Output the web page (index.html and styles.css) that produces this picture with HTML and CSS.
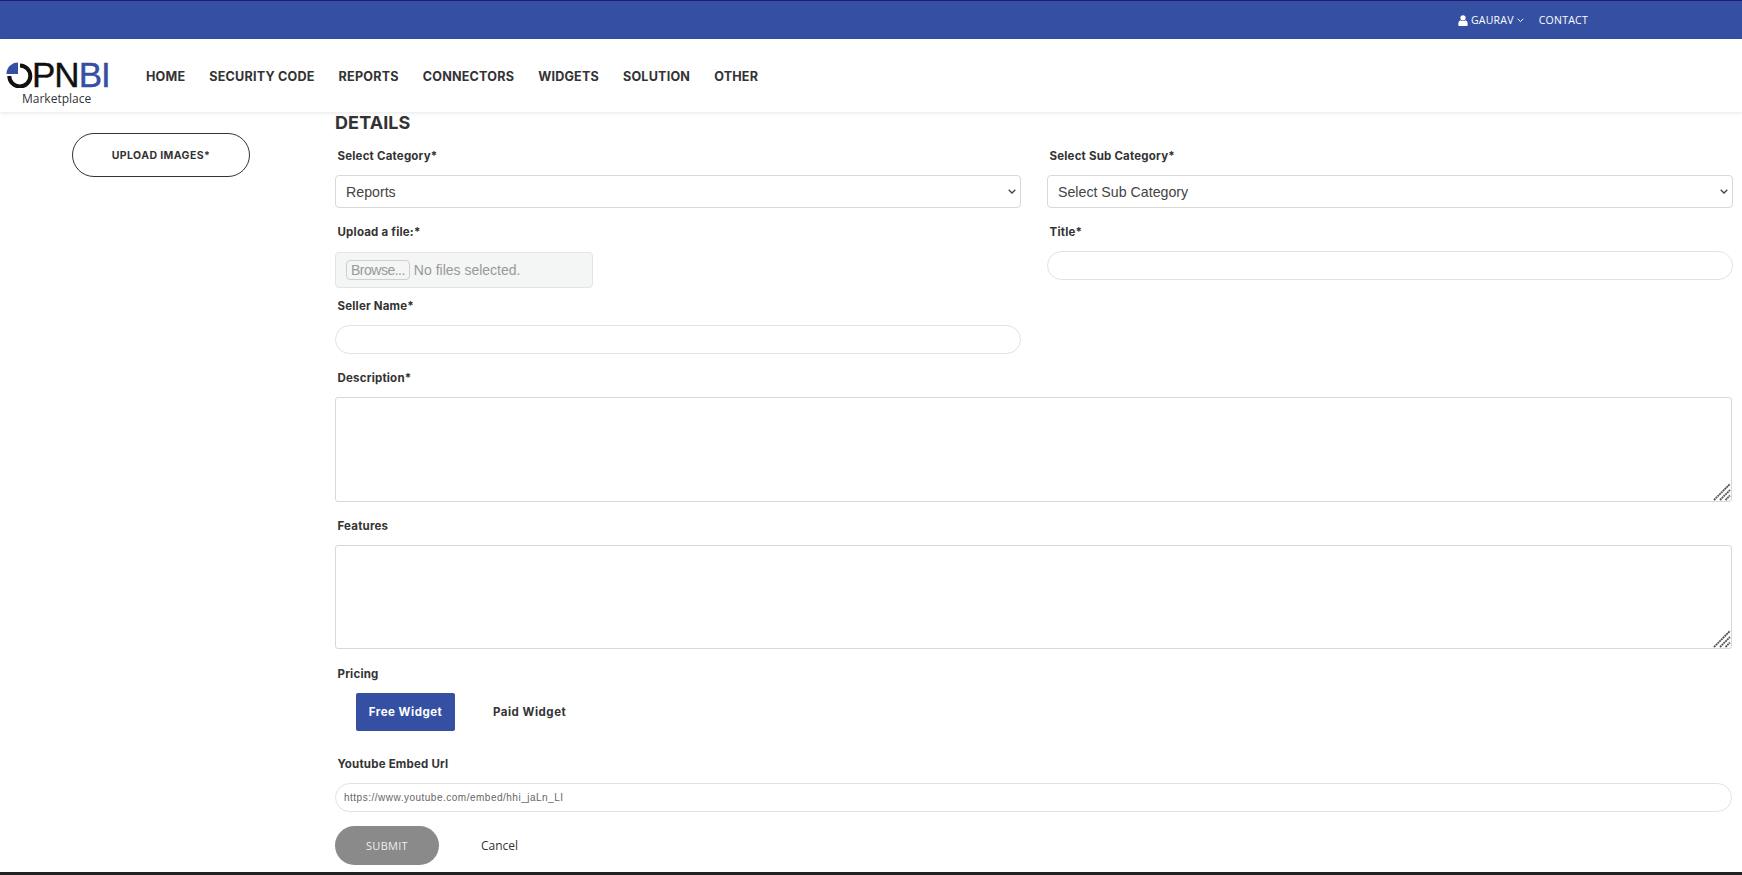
FILE: index.html
```html
<!DOCTYPE html>
<html>
<head>
  <title>OPNBI Marketplace</title>
  <link rel="stylesheet" href="styles.css">
</head>
<body>
  <div class="topbar">
    <a class="top-link">
      <svg class="user-icon" width="10" height="11" viewBox="0 0 10 11"><circle cx="5" cy="2.8" r="2.6"/><path d="M0.3 10.2C0.1 7.4 1 5.6 2.6 5.2 3.3 5.8 4.1 6.1 5 6.1s1.7-.3 2.4-.9C9 5.6 9.9 7.4 9.7 10.2 9.6 10.7 9.2 11 8.7 11H1.3C.8 11 .4 10.7.3 10.2z"/></svg>
      GAURAV
      <svg class="caret" width="7" height="5" viewBox="0 0 7 5"><path d="M0.7 0.8L3.5 3.6 6.3 0.8"/></svg>
    </a>
    <a class="top-link">CONTACT</a>
  </div>

  <div class="navbar">
    <div class="logo">
      <div class="logo-mark">
        <svg width="27" height="26" viewBox="0 0 27 26">
          <path class="ring" d="M14 3.5A10.5 10.5 0 1 1 3.3 14" />
          <path class="slice" d="M12 0.5V12H0.5A11.5 11.5 0 0 1 12 0.5z" />
        </svg>
        <span class="logo-pn">PN</span><span class="logo-bi">BI</span>
      </div>
      <div class="logo-sub">Marketplace</div>
    </div>
    <ul class="nav-menu">
      <li>HOME</li>
      <li>SECURITY CODE</li>
      <li>REPORTS</li>
      <li>CONNECTORS</li>
      <li>WIDGETS</li>
      <li>SOLUTION</li>
      <li>OTHER</li>
    </ul>
  </div>

  <div class="page">
    <div class="sidebar">
      <button class="upload-btn">UPLOAD IMAGES*</button>
    </div>

    <div class="details">
      <h2>DETAILS</h2>

      <div class="form-row">
        <div class="field">
          <label>Select Category*</label>
          <select class="select-input"><option>Reports</option></select>
        </div>
        <div class="field">
          <label>Select Sub Category*</label>
          <select class="select-input"><option>Select Sub Category</option></select>
        </div>
      </div>

      <div class="form-row row-file">
        <div class="field">
          <label>Upload a file:*</label>
          <div class="file-box">
            <span class="browse">Browse...</span>
            <span>No files selected.</span>
          </div>
        </div>
        <div class="field">
          <label>Title*</label>
          <input class="text-input" type="text">
        </div>
      </div>

      <div class="form-row row-seller">
        <div class="field">
          <label>Seller Name*</label>
          <input class="text-input" type="text">
        </div>
      </div>

      <div class="field field-area">
        <label>Description*</label>
        <div class="area-wrap">
          <textarea></textarea>
          <svg class="grip" width="18" height="18" viewBox="0 0 18 18"><path d="M1 17L17 1M7 17L17 7M12.5 17L17 12.5"/></svg>
        </div>
      </div>

      <div class="field field-area">
        <label>Features</label>
        <div class="area-wrap">
          <textarea></textarea>
          <svg class="grip" width="18" height="18" viewBox="0 0 18 18"><path d="M1 17L17 1M7 17L17 7M12.5 17L17 12.5"/></svg>
        </div>
      </div>

      <div class="field field-pricing">
        <label>Pricing</label>
        <div class="pricing-tabs">
          <span class="tab active">Free Widget</span>
          <span class="tab">Paid Widget</span>
        </div>
      </div>

      <div class="field field-url">
        <label>Youtube Embed Url</label>
        <input class="text-input url-input" type="text" value="https://www.youtube.com/embed/hhi_jaLn_LI">
      </div>

      <div class="actions">
        <button class="submit-btn">SUBMIT</button>
        <a class="cancel">Cancel</a>
      </div>
    </div>
  </div>

  <div class="footer"></div>
</body>
</html>
```

FILE: styles.css
```css
:root {
  --primary: #3550a3;
  --text: #333;
  --line: #e2e2e2;
}

html, body {
  height: 875px;
  overflow: hidden;
}

body {
  margin: 0;
  font-family: 'Inter', 'Liberation Sans', sans-serif;
  color: var(--text);
  background: white;
}

/* Top bar */
.topbar {
  height: 38px;
  box-sizing: content-box;
  border-top: 1px solid #1f1c74;
  background: var(--primary);
  display: flex;
  align-items: center;
  justify-content: flex-end;
  gap: 15px;
  padding-right: 154px;
}

.top-link {
  display: flex;
  align-items: center;
  gap: 3px;
  font-family: 'Open Sans', sans-serif;
  font-size: 10.5px;
  letter-spacing: 0.25px;
  color: white;
}

.user-icon {
  fill: white;
}

.caret {
  fill: none;
  stroke: white;
  stroke-width: 1;
}

/* Navbar */
.navbar {
  height: 73px;
  display: flex;
  align-items: center;
  box-shadow: 0 1px 4px rgba(0,0,0,0.1);
  position: relative;
}

.logo {
  width: 146px;
  padding: 18px 0 0 6px;
  box-sizing: border-box;
  flex: none;
}

.logo-mark {
  display: flex;
  align-items: center;
  height: 26px;
  font-family: 'Liberation Sans', sans-serif;
  font-size: 35px;
  line-height: 26px;
  letter-spacing: -1px;
  -webkit-text-stroke: 0.4px;
}

.logo-mark svg {
  flex: none;
  margin-right: -1px;
}

.logo-mark .ring {
  fill: none;
  stroke: #111;
  stroke-width: 4;
}

.logo-mark .slice {
  fill: var(--primary);
}

.logo-pn {
  color: #111;
}

.logo-bi {
  color: var(--primary);
}

.logo-sub {
  margin-top: 3px;
  padding-left: 16px;
  font-family: 'Open Sans', sans-serif;
  font-size: 12px;
  line-height: 16px;
  color: #333;
}

.nav-menu {
  display: flex;
  gap: 24px;
  list-style: none;
  margin: 0;
  padding: 1px 0 0;
  font-size: 12.6px;
  font-weight: 700;
  letter-spacing: 0.2px;
}

/* Page */
.page {
  display: flex;
  padding-right: 10px;
}

.sidebar {
  width: 335px;
  flex: none;
  padding: 21px 0 0 72px;
  box-sizing: border-box;
}

.upload-btn {
  width: 178px;
  height: 44px;
  border: 1px solid #333;
  border-radius: 22px;
  background: white;
  font-family: inherit;
  font-size: 10.5px;
  font-weight: 700;
  letter-spacing: 0.4px;
  color: var(--text);
}

.details {
  flex: 1;
  min-width: 0;
}

.details h2 {
  margin: 0;
  font-size: 18px;
  font-weight: 700;
  line-height: 22px;
  letter-spacing: 0.1px;
}

.form-row {
  display: grid;
  grid-template-columns: 686px 686px;
  gap: 26px;
  margin-top: 14px;
}

.field label {
  display: block;
  margin-left: 2.5px;
  font-size: 11.5px;
  font-weight: 700;
  line-height: 16px;
  letter-spacing: 0.2px;
}

.form-row .field label {
  margin-bottom: 11px;
}

.select-input {
  display: block;
  width: 100%;
  height: 33px;
  padding: 0 10px;
  border: 1px solid #d8d8d8;
  border-radius: 4px;
  appearance: none;
  background: white url("data:image/svg+xml,%3Csvg xmlns='http://www.w3.org/2000/svg' width='8' height='5'%3E%3Cpath d='M.7.8L4 4 7.3.8' fill='none' stroke='%23444' stroke-width='1.3'/%3E%3C/svg%3E") no-repeat right 4px center;
  font-family: 'Liberation Sans', sans-serif;
  font-size: 14.2px;
  color: #444;
}

.text-input {
  display: block;
  width: 100%;
  height: 29px;
  box-sizing: border-box;
  border: 1px solid var(--line);
  border-radius: 15px;
  padding: 0 8px;
  background: white;
}

.row-file {
  margin-top: 16px;
}

.row-seller {
  margin-top: 10px;
}

.file-box {
  width: 258px;
  height: 36px;
  margin-top: 12px;
  box-sizing: border-box;
  display: flex;
  align-items: center;
  gap: 4px;
  padding-left: 10px;
  border: 1px solid #e4e4e4;
  border-radius: 4px;
  background: #f4f5f5;
  font-family: 'Liberation Sans', sans-serif;
  font-size: 14px;
  color: #999;
}

.browse {
  padding: 1px 4px;
  border: 1px solid #cfcfcf;
  border-radius: 4px;
  letter-spacing: -0.5px;
}

.field-area {
  margin-top: 16px;
}

.field-area label {
  margin-bottom: 11px;
}

.area-wrap {
  position: relative;
  height: 105px;
}

.field-area + .field-area .area-wrap {
  height: 104px;
}

.area-wrap textarea {
  display: block;
  width: 100%;
  height: 100%;
  box-sizing: border-box;
  border: 1px solid #d8d8d8;
  border-radius: 3px;
  resize: none;
  background: white;
}

.grip {
  position: absolute;
  right: 1px;
  bottom: 1px;
  fill: none;
  stroke: #555;
  stroke-width: 1.8;
  stroke-dasharray: 2 0.5;
}

.field-pricing {
  margin-top: 17px;
}

.pricing-tabs {
  display: flex;
  align-items: center;
  gap: 38px;
  margin: 11px 0 0 21px;
}

.tab {
  font-size: 11.5px;
  font-weight: 700;
  letter-spacing: 0.5px;
}

.tab.active {
  width: 99px;
  height: 38px;
  display: flex;
  align-items: center;
  justify-content: center;
  border-radius: 2px;
  background: var(--primary);
  color: white;
}

.field-url {
  margin-top: 25px;
}

.field-url label {
  margin-bottom: 11px;
}

.url-input {
  font-family: 'Liberation Sans', sans-serif;
  font-size: 10px;
  letter-spacing: 0.5px;
  color: #666;
}

.actions {
  display: flex;
  align-items: center;
  gap: 42px;
  margin-top: 14px;
}

.submit-btn {
  width: 104px;
  height: 39px;
  border: none;
  border-radius: 20px;
  background: #8a8a8a;
  font-family: 'Open Sans', sans-serif;
  font-size: 11px;
  letter-spacing: 0.3px;
  color: #eee;
}

.cancel {
  font-family: 'Open Sans', sans-serif;
  font-size: 12px;
  color: #333;
}

/* Footer strip */
.footer {
  position: fixed;
  left: 0;
  right: 0;
  bottom: 0;
  height: 3px;
  background: #222;
}
```
